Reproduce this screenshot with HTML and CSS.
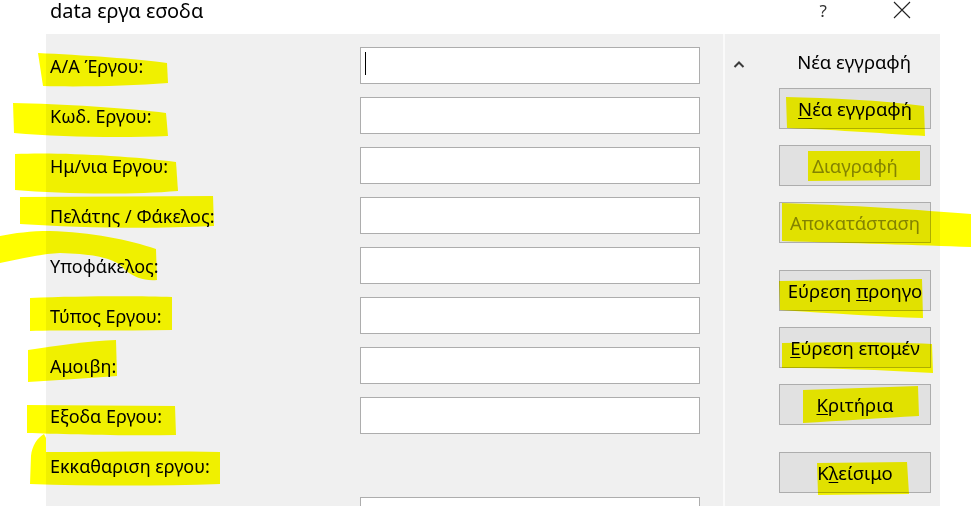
FILE: index.html
```html
<!DOCTYPE html>
<html lang="el">
<head>
<meta charset="utf-8">
<title>data εργα εσοδα</title>
<link rel="stylesheet" href="styles.css">
</head>
<body>
<div class="window">
  <header class="titlebar">
    <span class="title">data εργα εσοδα</span>
    <span class="help">?</span>
    <span class="close"><svg width="18" height="18" viewBox="0 0 18 18"><path d="M1 1 L17 17 M17 1 L1 17" stroke="#222" stroke-width="1.1" fill="none"/></svg></span>
  </header>
  <div class="panel">
    <div class="form">
      <div class="row"><label class="lbl">Α/Α Έργου:</label><div class="field"><input class="inp" type="text"><span class="caret"></span></div></div>
      <div class="row"><label class="lbl">Κωδ. Εργου:</label><input class="inp" type="text"></div>
      <div class="row"><label class="lbl">Ημ/νια Εργου:</label><input class="inp" type="text"></div>
      <div class="row"><label class="lbl">Πελάτης / Φάκελος:</label><input class="inp" type="text"></div>
      <div class="row"><label class="lbl">Υποφάκελος:</label><input class="inp" type="text"></div>
      <div class="row"><label class="lbl">Τύπος Εργου:</label><input class="inp" type="text"></div>
      <div class="row"><label class="lbl">Αμοιβη:</label><input class="inp" type="text"></div>
      <div class="row"><label class="lbl">Εξοδα Εργου:</label><input class="inp" type="text"></div>
      <div class="row"><label class="lbl">Εκκαθαριση εργου:</label></div>
      <div class="row"><span class="lbl"></span><input class="inp" type="text"></div>
    </div>
    <div class="side">
      <div class="side-head">
        <svg class="chev" width="12" height="8" viewBox="0 0 12 8"><path d="M1.5 7 L6 2.5 L10.5 7" stroke="#3c3c3c" stroke-width="2" fill="none"/></svg>
        <span class="side-title">Νέα εγγραφή</span>
      </div>
      <div class="buttons">
        <button class="btn"><u>Ν</u>έα εγγραφή</button>
        <button class="btn" disabled>Διαγραφή</button>
        <button class="btn" disabled>Αποκατάσταση</button>
        <button class="btn group">Εύρεση <u>π</u>ροηγο</button>
        <button class="btn"><u>Ε</u>ύρεση επομέν</button>
        <button class="btn"><u>Κ</u>ριτήρια</button>
        <button class="btn group">Κ<u>λ</u>είσιμο</button>
      </div>
    </div>
  </div>
  <svg class="marks" width="971" height="506" viewBox="0 0 971 506">
    <g fill="#ffff00">
      <path d="M38,53 C80,55 140,59 167,63 L168,83 C130,86 80,87 43,86 Z"/>
      <path d="M13,103 C60,104 130,108 166,113 L168,136 C120,138 60,137 14,133 Z"/>
      <path d="M15,154 C60,152 130,156 176,162 L178,191 C130,195 60,194 15,190 Z"/>
      <path d="M20,197 L213,196 L214,226 C150,229 80,228 20,224 Z"/>
      <path d="M0,236 C15,233 30,231 50,231 C90,232 130,240 156,249 L157,280 C145,281 135,278 125,270 C118,260 100,254 60,253 C40,254 20,259 0,263 Z"/>
      <path d="M30,298 C80,296 140,296 172,297 L172,330 C120,331 60,330 30,331 Z"/>
      <path d="M28,350 C60,345 90,341 116,340 L117,376 C90,378 60,380 28,382 Z"/>
      <path d="M27,405 L175,406 L176,435 C120,436 60,434 27,433 Z"/>
      <path d="M44,434 C37,438 32,446 31,456 L30,484 C90,486 160,486 220,484 L220,452 C160,451 100,452 46,452 L46,438 Z"/>
      <path d="M786,97 C830,98 880,100 924,106 L925,136 C890,134 840,130 787,128 Z"/>
      <path d="M808,151 L920,151 L920,180 L808,181 Z"/>
      <path d="M782,203 C850,205 920,210 971,214 L971,247 C920,245 850,243 782,241 Z"/>
      <path d="M779,281 L922,279 L923,318 C880,317 830,313 780,310 Z"/>
      <path d="M782,343 C840,342 890,342 932,344 L933,373 C880,370 830,368 782,368 Z"/>
      <path d="M803,390 L918,386 L919,416 C880,418 840,421 803,423 Z"/>
      <path d="M817,463 L907,462 L909,494 L818,495 Z"/>
    </g>
  </svg>
</div>
</body>
</html>
```
FILE: styles.css
```css
* { box-sizing: border-box; }
html, body { margin: 0; padding: 0; background: #ffffff; }
body {
  font-family: "Noto Sans", "Open Sans", sans-serif;
  color: #000;
  width: 971px;
  height: 506px;
  overflow: hidden;
}
.window {
  position: relative;
  width: 971px;
  height: 506px;
  display: flex;
  flex-direction: column;
}
.titlebar {
  height: 34px;
  display: flex;
  align-items: flex-start;
  padding-left: 50px;
  flex: none;
}
.title {
  font-size: 20px;
  line-height: 22px;
  color: #000;
}
.help {
  margin-left: auto;
  font-size: 17px;
  line-height: 22px;
  color: #333;
}
.close {
  margin-left: 66px;
  margin-right: 60px;
  display: flex;
  padding-top: 1px;
}
.panel {
  margin-left: 46px;
  width: 894px;
  flex: 1;
  background: #f0f0f0;
  display: flex;
  overflow: hidden;
}
.form {
  width: 677px;
  padding: 13px 0 0 4px;
  display: flex;
  flex-direction: column;
  gap: 13px;
}
.row {
  display: grid;
  grid-template-columns: 310px 340px;
  height: 37px;
  flex: none;
  align-items: center;
}
.lbl {
  font-size: 18px;
  line-height: 22px;
  padding-top: 0;
  color: #000;
}
.field {
  position: relative;
  height: 37px;
}
.inp {
  width: 340px;
  height: 37px;
  margin: 0;
  border: 1px solid #adadad;
  background: #ffffff;
  outline: none;
  padding: 0 4px;
  font: inherit;
}
.caret {
  position: absolute;
  left: 5px;
  top: 5px;
  width: 1px;
  height: 23px;
  background: #000;
}
.side {
  flex: 1;
  border-left: 2px solid #fafafa;
  padding: 16px 9px 0 8px;
  display: flex;
  flex-direction: column;
}
.side-head {
  height: 24px;
  display: flex;
  align-items: center;
  justify-content: space-between;
}
.chev { margin-top: 4px; }
.side-title {
  font-size: 18.5px;
  line-height: 22px;
  margin-right: 20px;
  color: #000;
}
.buttons {
  margin-top: 14px;
  align-self: flex-end;
  display: flex;
  flex-direction: column;
  gap: 15px;
}
.btn {
  width: 152px;
  height: 41px;
  margin: 0;
  border: 1px solid #adadad;
  background: #e1e1e1;
  font-family: "Noto Sans", "Open Sans", sans-serif;
  font-size: 18.5px;
  color: #000;
  padding: 0;
  border-radius: 0;
  white-space: nowrap;
  overflow: hidden;
}
.btn + .btn { margin-top: 1px; }
.btn.group { margin-top: 12px; }
.btn:disabled { color: #838383; }
.btn u { text-decoration-thickness: 1px; text-underline-offset: 2px; }
.marks {
  position: absolute;
  left: 0;
  top: 0;
  pointer-events: none;
  mix-blend-mode: multiply;
}
```
